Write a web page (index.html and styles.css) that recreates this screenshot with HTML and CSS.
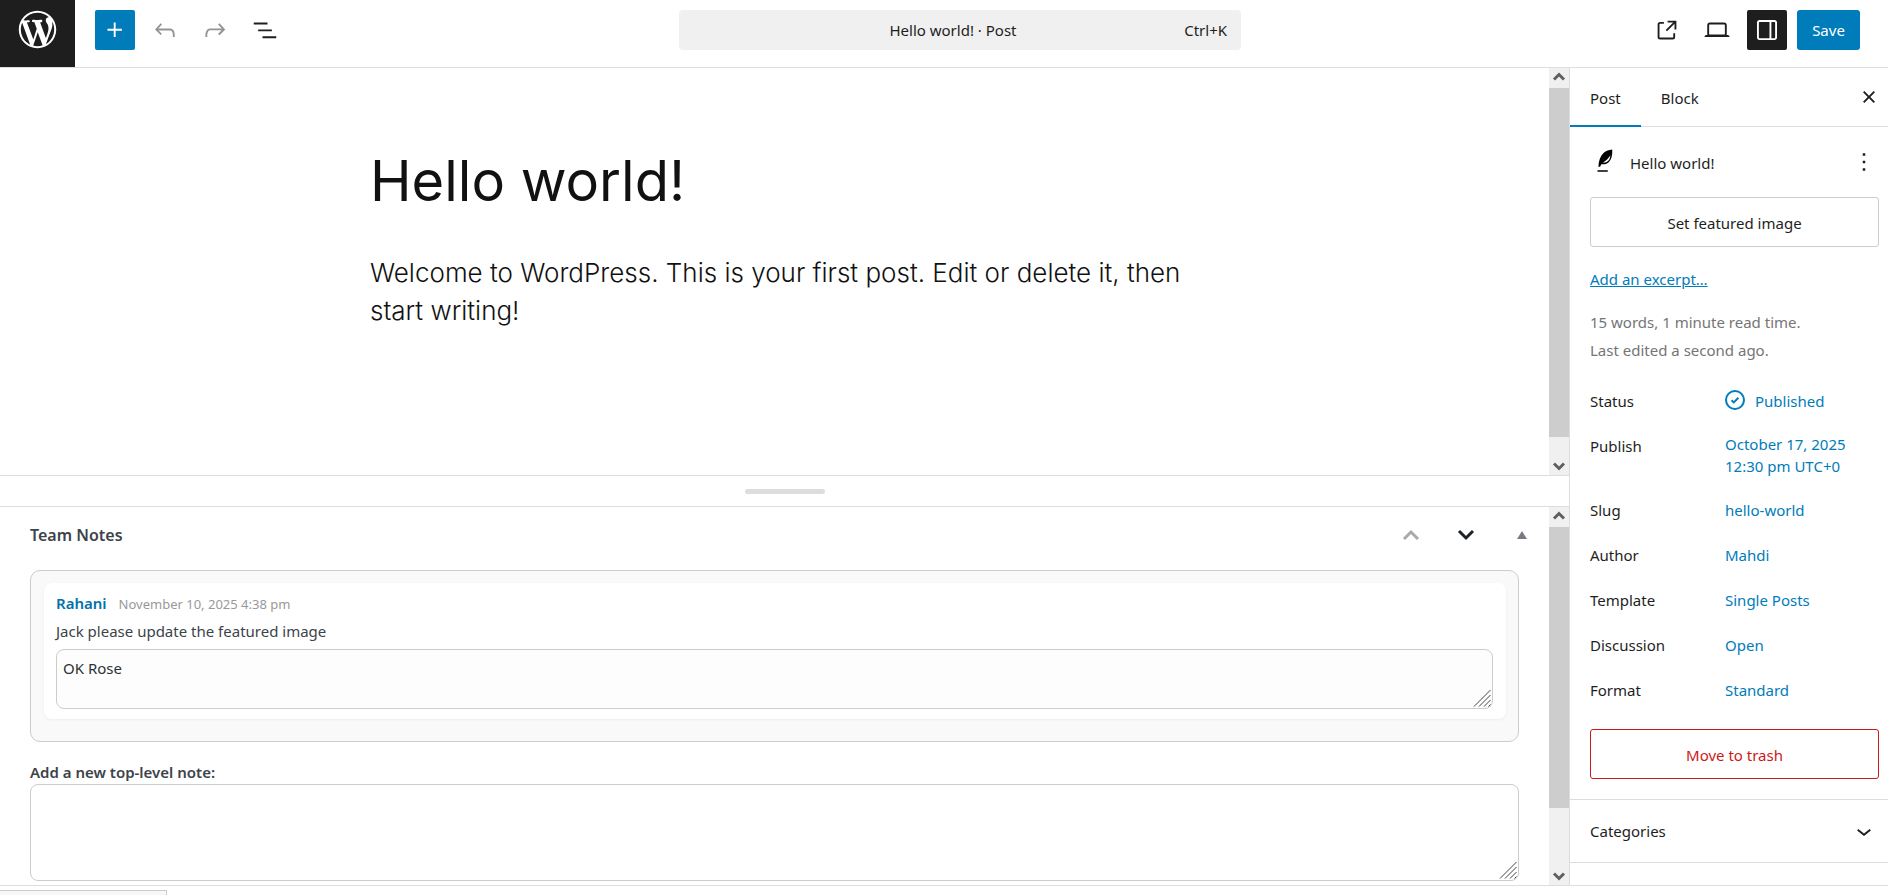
FILE: index.html
```html
<!DOCTYPE html>
<html lang="en">
<head>
  <meta charset="UTF-8" />
  <meta name="viewport" content="width=device-width, initial-scale=1.0"/>
  <title>Edit Post "Hello world!"</title>
  <link rel="stylesheet" href="styles.css">
</head>

<body>
  <header class="topbar">
    <a class="logo" href="#" aria-label="View Posts">
      <svg viewBox="-2 -2 24 24"><path d="M20 10c0-5.51-4.49-10-10-10C4.48 0 0 4.49 0 10c0 5.52 4.48 10 10 10 5.51 0 10-4.48 10-10zM7.78 15.37L4.37 6.22c.55-.02 1.17-.08 1.17-.08.5-.06.44-1.13-.06-1.11 0 0-1.45.11-2.37.11-.18 0-.37 0-.58-.01C4.12 2.69 6.87 1.11 10 1.11c2.33 0 4.45.87 6.05 2.34-.68-.11-1.65.39-1.65 1.58 0 .74.45 1.36.9 2.1.35.61.55 1.36.55 2.46 0 1.49-1.4 5-1.4 5l-3.03-8.37c.54-.02.82-.17.82-.17.5-.05.44-1.25-.06-1.22 0 0-1.44.12-2.38.12-.87 0-2.33-.12-2.33-.12-.5-.03-.56 1.2-.06 1.22l.92.08 1.26 3.41zM17.41 10c.24-.64.74-1.87.43-4.25.7 1.29 1.05 2.71 1.05 4.25 0 3.29-1.73 6.24-4.4 7.78.97-2.59 1.94-5.2 2.92-7.78zM6.1 18.09C3.12 16.65 1.11 13.53 1.11 10c0-1.3.23-2.48.72-3.59C3.25 10.3 4.67 14.2 6.1 18.09zm4.03-6.63l2.58 6.98c-.86.29-1.76.45-2.71.45-.79 0-1.57-.11-2.29-.33.81-2.38 1.62-4.74 2.42-7.1z"/></svg>
    </a>
    <div class="tools">
      <button class="icon-btn primary" aria-label="Block Inserter"><svg viewBox="0 0 24 24"><path d="M11 12.5V17.5H12.5V12.5H17.5V11H12.5V6H11V11H6V12.5H11Z"/></svg></button>
      <button class="icon-btn muted" aria-label="Undo"><svg viewBox="0 0 24 24"><path d="M18.3 11.7c-.6-.6-1.4-.9-2.3-.9H6.7l2.9-3.3-1.1-1-4.5 5L8.5 16l1-1-2.7-2.7H16c.5 0 .9.2 1.3.5 1 1 1 3.4 1 4.5v.3h1.5v-.2c0-1.5 0-4.3-1.5-5.7z"/></svg></button>
      <button class="icon-btn muted" aria-label="Redo"><svg viewBox="0 0 24 24"><path d="M15.6 6.5l-1.1 1 2.9 3.3H8c-.9 0-1.7.3-2.3.9-1.4 1.5-1.4 4.2-1.4 5.6v.2h1.5v-.3c0-1.1 0-3.5 1-4.5.3-.3.7-.5 1.3-.5h9.2L14.5 15l1.1 1.1 4.6-4.6-4.6-5z"/></svg></button>
      <button class="icon-btn" aria-label="Document Overview"><svg viewBox="0 0 24 24"><path d="M3 6h11v1.5H3V6Zm3.5 5.5h11V13h-11v-1.5ZM21 17H10v1.5h11V17Z"/></svg></button>
    </div>
    <button class="command">
      <span class="command-title">Hello world! · Post</span>
      <span class="command-key">Ctrl+K</span>
    </button>
    <div class="actions">
      <button class="icon-btn" aria-label="View Post"><svg viewBox="0 0 24 24"><path d="M19.5 4.5h-7V6h4.44l-5.97 5.97 1.06 1.06L18 7.06v4.44h1.5v-7Zm-13 1a2 2 0 0 0-2 2v10a2 2 0 0 0 2 2h10a2 2 0 0 0 2-2v-3H17v3a.5.5 0 0 1-.5.5h-10a.5.5 0 0 1-.5-.5v-10a.5.5 0 0 1 .5-.5h3V5.5h-3Z"/></svg></button>
      <button class="icon-btn" aria-label="View"><svg viewBox="0 0 24 24"><path d="M20.5 16h-.7V8c0-1.1-.9-2-2-2H6.2c-1.1 0-2 .9-2 2v8h-.7c-.8 0-1.5.7-1.5 1.5h20c0-.8-.7-1.5-1.5-1.5zM5.7 8c0-.3.2-.5.5-.5h11.6c.3 0 .5.2.5.5v7.6H5.7V8z"/></svg></button>
      <button class="icon-btn pressed" aria-label="Settings"><svg viewBox="0 0 24 24"><path d="M18 4H6c-1.1 0-2 .9-2 2v12c0 1.1.9 2 2 2h12c1.1 0 2-.9 2-2V6c0-1.1-.9-2-2-2zm-4 14.5H6c-.3 0-.5-.2-.5-.5V6c0-.3.2-.5.5-.5h8v13zm4.5-.5c0 .3-.2.5-.5.5h-2.5v-13H18c.3 0 .5.2.5.5v12z"/></svg></button>
      <button class="save">Save</button>
    </div>
  </header>

  <div class="workspace">
    <main class="content">
      <section class="pane canvas">
        <article class="post">
          <h1>Hello world!</h1>
          <p>Welcome to WordPress. This is your first post. Edit or delete it, then start writing!</p>
        </article>
        <div class="scrollbar" aria-hidden="true">
          <svg viewBox="0 0 20 20"><path d="M5 11.500l5-5 5 5"/></svg>
          <div class="track"><div class="thumb thumb-canvas"></div></div>
          <svg viewBox="0 0 20 20"><path d="M5 8.500l5 5 5-5"/></svg>
        </div>
      </section>

      <div class="resizer"><span></span></div>

      <section class="pane metabox">
        <div class="metabox-inner">
          <div class="metabox-head">
            <h2>Team Notes</h2>
            <button class="order-btn dim" aria-label="Move up"><svg viewBox="0 0 20 20"><path d="M3 14l7-7 7 7"/></svg></button>
            <button class="order-btn" aria-label="Move down"><svg viewBox="0 0 20 20"><path d="M3 6l7 7 7-7"/></svg></button>
            <button class="toggle-btn" aria-label="Toggle panel: Team Notes"><svg viewBox="0 0 10 8"><path d="M5 0l5 8H0z"/></svg></button>
          </div>
          <div class="notes">
            <div class="note">
              <div class="note-meta"><strong>Rahani</strong><time>November 10, 2025 4:38 pm</time></div>
              <p>Jack please update the featured image</p>
              <div class="field">
                <textarea class="reply" aria-label="Reply">OK Rose</textarea>
                <svg class="grip" viewBox="0 0 18 18"><path d="M1 17.500L17.500 1M6 17.500L17.500 6M11 17.500L17.500 11M15.500 17.500l2-2"/></svg>
              </div>
            </div>
          </div>
          <label class="new-label" for="new-note">Add a new top-level note:</label>
          <div class="field">
            <textarea class="new-note" id="new-note"></textarea>
            <svg class="grip" viewBox="0 0 18 18"><path d="M1 17.500L17.500 1M6 17.500L17.500 6M11 17.500L17.500 11M15.500 17.500l2-2"/></svg>
          </div>
        </div>
        <div class="scrollbar" aria-hidden="true">
          <svg viewBox="0 0 20 20"><path d="M5 11.500l5-5 5 5"/></svg>
          <div class="track"><div class="thumb thumb-metabox"></div></div>
          <svg viewBox="0 0 20 20"><path d="M5 8.500l5 5 5-5"/></svg>
        </div>
      </section>
    </main>

    <aside class="sidebar">
      <div class="tabs">
        <button class="tab active">Post</button>
        <button class="tab">Block</button>
        <button class="close" aria-label="Close Settings"><svg viewBox="0 0 24 24"><path d="M12 13.06l3.712 3.713 1.061-1.06L13.061 12l3.712-3.712-1.06-1.06L12 10.938 8.288 7.227l-1.061 1.06L10.939 12l-3.712 3.712 1.06 1.061L12 13.061z"/></svg></button>
      </div>

      <div class="summary">
        <div class="card-head">
          <svg class="quill" viewBox="0 0 24 24">
            <path d="M6 18.500h8.200v1.300H6zM6.700 15.800c.2-4.800 1.500-8.800 4.300-11.300 1.800-1.500 4-2.200 6.800-2.500.2 4.400-.5 8-2.800 10.100-1.700 1.500-3.800 1.900-6 1.700l-.9 2z"/>
            <path class="quill-gap" d="M16.300 6.500c-1.300 2.300-3.200 4.300-6 6 1.900.1 3.300-.4 4.300-1.500 1.100-1.200 1.600-2.700 1.700-4.500z"/>
          </svg>
          <h2>Hello world!</h2>
          <button class="more" aria-label="Actions"><svg viewBox="0 0 24 24"><path d="M13 19h-2v-2h2v2zm0-6h-2v-2h2v2zm0-6h-2V5h2v2z"/></svg></button>
        </div>
        <button class="wide-btn">Set featured image</button>
        <a class="excerpt" href="#">Add an excerpt…</a>
        <p class="info">15 words, 1 minute read time.<br>Last edited a second ago.</p>

        <dl class="rows">
          <div class="row"><dt>Status</dt><dd><a href="#"><svg class="status-icon" viewBox="0 0 20 20"><circle cx="10" cy="10" r="9"/><path d="M6.500 10.200l2.300 2.200 4.600-4.600"/></svg>Published</a></dd></div>
          <div class="row"><dt>Publish</dt><dd><a href="#">October 17, 2025<br>12:30 pm UTC+0</a></dd></div>
          <div class="row"><dt>Slug</dt><dd><a href="#">hello-world</a></dd></div>
          <div class="row"><dt>Author</dt><dd><a href="#">Mahdi</a></dd></div>
          <div class="row"><dt>Template</dt><dd><a href="#">Single Posts</a></dd></div>
          <div class="row"><dt>Discussion</dt><dd><a href="#">Open</a></dd></div>
          <div class="row"><dt>Format</dt><dd><a href="#">Standard</a></dd></div>
        </dl>
        <button class="wide-btn trash">Move to trash</button>
      </div>

      <button class="panel-toggle">Categories
        <svg viewBox="0 0 24 24"><path d="M17.5 11.6L12 16l-5.500-4.400.9-1.200L12 14l4.500-3.600 1 1.200z"/></svg>
      </button>
    </aside>
  </div>

  <footer class="footer"><div class="status-bubble"></div></footer>
</body>
</html>
```
FILE: styles.css
```css
* {
  box-sizing: border-box;
}
body {
  margin: 0;
  height: 100vh;
  display: flex;
  flex-direction: column;
  overflow: hidden;
  font-family: "Noto Sans", "Open Sans", sans-serif;
  font-size: 15px;
  line-height: 22px;
  color: #1e1e1e;
  background: #fff;
}
h1, h2, p, dl, dd {
  margin: 0;
}
button {
  font: inherit;
  color: inherit;
  padding: 0;
  border: none;
  background: none;
  cursor: pointer;
}
a {
  color: #007cba;
  text-decoration: none;
}
svg {
  display: block;
  flex: none;
}

/* top bar */
.topbar {
  display: grid;
  grid-template-columns: 1fr 562px 1fr;
  align-items: start;
  height: 68px;
  flex: none;
  padding: 0 28px 0 60px;
  border-bottom: 1px solid #ddd;
  position: relative;
}
.logo {
  position: absolute;
  left: 0;
  top: 0;
  width: 75px;
  height: 67px;
  padding: 7px 15px;
  background: #1e1e1e;
}
.logo svg {
  width: 45px;
  height: 45px;
  fill: #fff;
}
.tools, .actions {
  display: flex;
  gap: 10px;
  padding-top: 10px;
}
.tools {
  padding-left: 35px;
}
.actions {
  justify-content: flex-end;
}
.icon-btn {
  width: 40px;
  height: 40px;
  display: flex;
  align-items: center;
  justify-content: center;
  border-radius: 2px;
}
.icon-btn svg {
  width: 30px;
  height: 30px;
  fill: currentColor;
}
.primary, .save {
  background: #007cba;
  color: #fff;
}
.muted {
  color: #949494;
}
.pressed {
  background: #1e1e1e;
  color: #fff;
}
.save {
  width: 63px;
  height: 40px;
  border-radius: 3px;
}
.command {
  display: grid;
  grid-template-columns: 1fr auto 1fr;
  align-items: center;
  height: 40px;
  margin-top: 10px;
  padding-right: 14px;
  border-radius: 4px;
  background: #f0f0f0;
}
.command-title {
  grid-column: 2;
}
.command-key {
  text-align: right;
}

/* editor area */
.workspace {
  display: flex;
  flex: 1;
  min-height: 0;
}
.content {
  flex: 1;
  min-width: 0;
  display: flex;
  flex-direction: column;
  border-right: 1px solid #ddd;
}
.pane {
  display: flex;
  min-height: 0;
  overflow: hidden;
}
.canvas {
  flex: 408 1 0;
  border-bottom: 1px solid #ddd;
}
.post {
  flex: 1;
  padding: 77px 350px 0 370px;
  font-family: Inter, sans-serif;
  font-weight: 300;
  color: #111;
}
.post h1 {
  font-size: 56px;
  font-weight: 400;
  line-height: 72px;
}
.post p {
  margin-top: 37px;
  font-size: 26px;
  line-height: 38px;
}
.resizer {
  flex: none;
  height: 31px;
  display: flex;
  align-items: center;
  justify-content: center;
  border-bottom: 1px solid #ddd;
}
.resizer span {
  width: 80px;
  height: 5px;
  border-radius: 3px;
  background: #ddd;
}
.scrollbar {
  flex: none;
  width: 20px;
  display: flex;
  flex-direction: column;
  background: #f0f0f0;
}
.scrollbar svg {
  width: 20px;
  height: 20px;
  fill: none;
  stroke: #606060;
  stroke-width: 3;
}
.track {
  flex: 1;
}
.thumb {
  background: #cdcdcd;
}
.thumb-canvas {
  height: 95%;
}
.thumb-metabox {
  height: 83%;
}

/* notes */
.metabox {
  flex: 378 1 0;
  color: #3c434a;
}
.metabox-inner {
  flex: 1;
  padding: 0 30px;
}
.metabox-head {
  display: flex;
  align-items: center;
  height: 63px;
  padding-bottom: 7px;
}
.metabox-head h2 {
  flex: 1;
  font-size: 16px;
  font-weight: 600;
}
.order-btn {
  width: 55px;
  display: flex;
  justify-content: center;
}
.order-btn svg {
  width: 20px;
  height: 20px;
  fill: none;
  stroke: #1d2327;
  stroke-width: 3;
}
.dim svg {
  stroke: #a7aaad;
}
.toggle-btn {
  width: 57px;
  margin-right: -31px;
  display: flex;
  justify-content: center;
}
.toggle-btn svg {
  width: 10px;
  height: 8px;
  fill: #787c82;
}
.notes {
  padding: 12px 12px 22px 13px;
  border: 1px solid #ccc;
  border-radius: 10px;
  background: #f9f9f9;
}
.note {
  padding: 9px 13px 10px 12px;
  border-radius: 8px;
  background: #fff;
  box-shadow: 0 1px 3px rgba(0, 0, 0, 0.05);
}
.note-meta strong {
  font-weight: 600;
  color: #0073aa;
}
.note-meta time {
  margin-left: 12px;
  font-size: 13px;
  color: #999;
}
.note p {
  margin: 5px 0 7px;
}
.field {
  position: relative;
}
textarea {
  display: block;
  width: 100%;
  font: inherit;
  color: #2c3338;
  border: 1px solid #ccc;
  border-radius: 8px;
  background: #fff;
  resize: none;
}
.reply {
  height: 60px;
  padding: 7px 6px;
  background: #fdfdfd;
}
.new-note {
  height: 97px;
  padding: 7px 6px;
}
.grip {
  position: absolute;
  right: 2px;
  bottom: 2px;
  width: 18px;
  height: 18px;
  fill: none;
  stroke: #444;
}
.new-label {
  display: block;
  margin-top: 19px;
  padding-bottom: 1px;
  font-weight: 600;
}

/* settings sidebar */
.sidebar {
  flex: none;
  width: 318px;
  overflow: hidden;
}
.tabs {
  display: flex;
  height: 59px;
  border-bottom: 1px solid #ddd;
}
.tab {
  height: 59px;
  padding: 3px 20px 0;
  border-bottom: 2px solid transparent;
}
.active {
  border-bottom-color: #007cba;
}
.close {
  margin-left: auto;
  padding: 0 4px;
}
.close svg, .more svg, .panel-toggle svg {
  width: 30px;
  height: 30px;
  fill: currentColor;
}
.summary {
  padding: 20px 9px 20px 20px;
  border-bottom: 1px solid #ddd;
}
.card-head {
  display: flex;
  align-items: center;
  height: 30px;
}
.quill {
  width: 30px;
  height: 30px;
}
.quill-gap {
  fill: #fff;
}
.card-head h2 {
  flex: 1;
  padding: 2px 0 0 10px;
  font-size: 15px;
  font-weight: 400;
}
.wide-btn {
  display: block;
  width: 100%;
  height: 50px;
  margin-top: 20px;
  padding-top: 2px;
  border: 1px solid #ccc;
  border-radius: 3px;
}
.excerpt {
  display: inline-block;
  margin-top: 21px;
  text-decoration: underline;
}
.info {
  margin-top: 18px;
  line-height: 28px;
  color: #757575;
}
.rows {
  display: grid;
  gap: 5px;
  margin-top: 16px;
}
.row {
  display: flex;
}
.row dt {
  width: 135px;
  padding-top: 10px;
}
.row dd {
  min-height: 40px;
  display: flex;
  align-items: center;
}
.row a {
  display: flex;
  padding: 8px 0 7px;
}
.status-icon {
  width: 20px;
  height: 20px;
  margin-right: 10px;
  fill: none;
  stroke: #007cba;
  stroke-width: 2;
}
.trash {
  border-color: #cc1818;
  color: #cc1818;
}
.panel-toggle {
  width: 100%;
  height: 63px;
  padding: 0 9px 0 20px;
  display: flex;
  align-items: center;
  justify-content: space-between;
  border-bottom: 1px solid #ddd;
}

/* bottom strip */
.footer {
  flex: none;
  height: 10px;
  padding-top: 4px;
  border-top: 1px solid #ddd;
}
.status-bubble {
  width: 167px;
  height: 5px;
  border: 1px solid #ccc;
  border-width: 1px 1px 0 0;
  background: #f7f7f7;
}
```
